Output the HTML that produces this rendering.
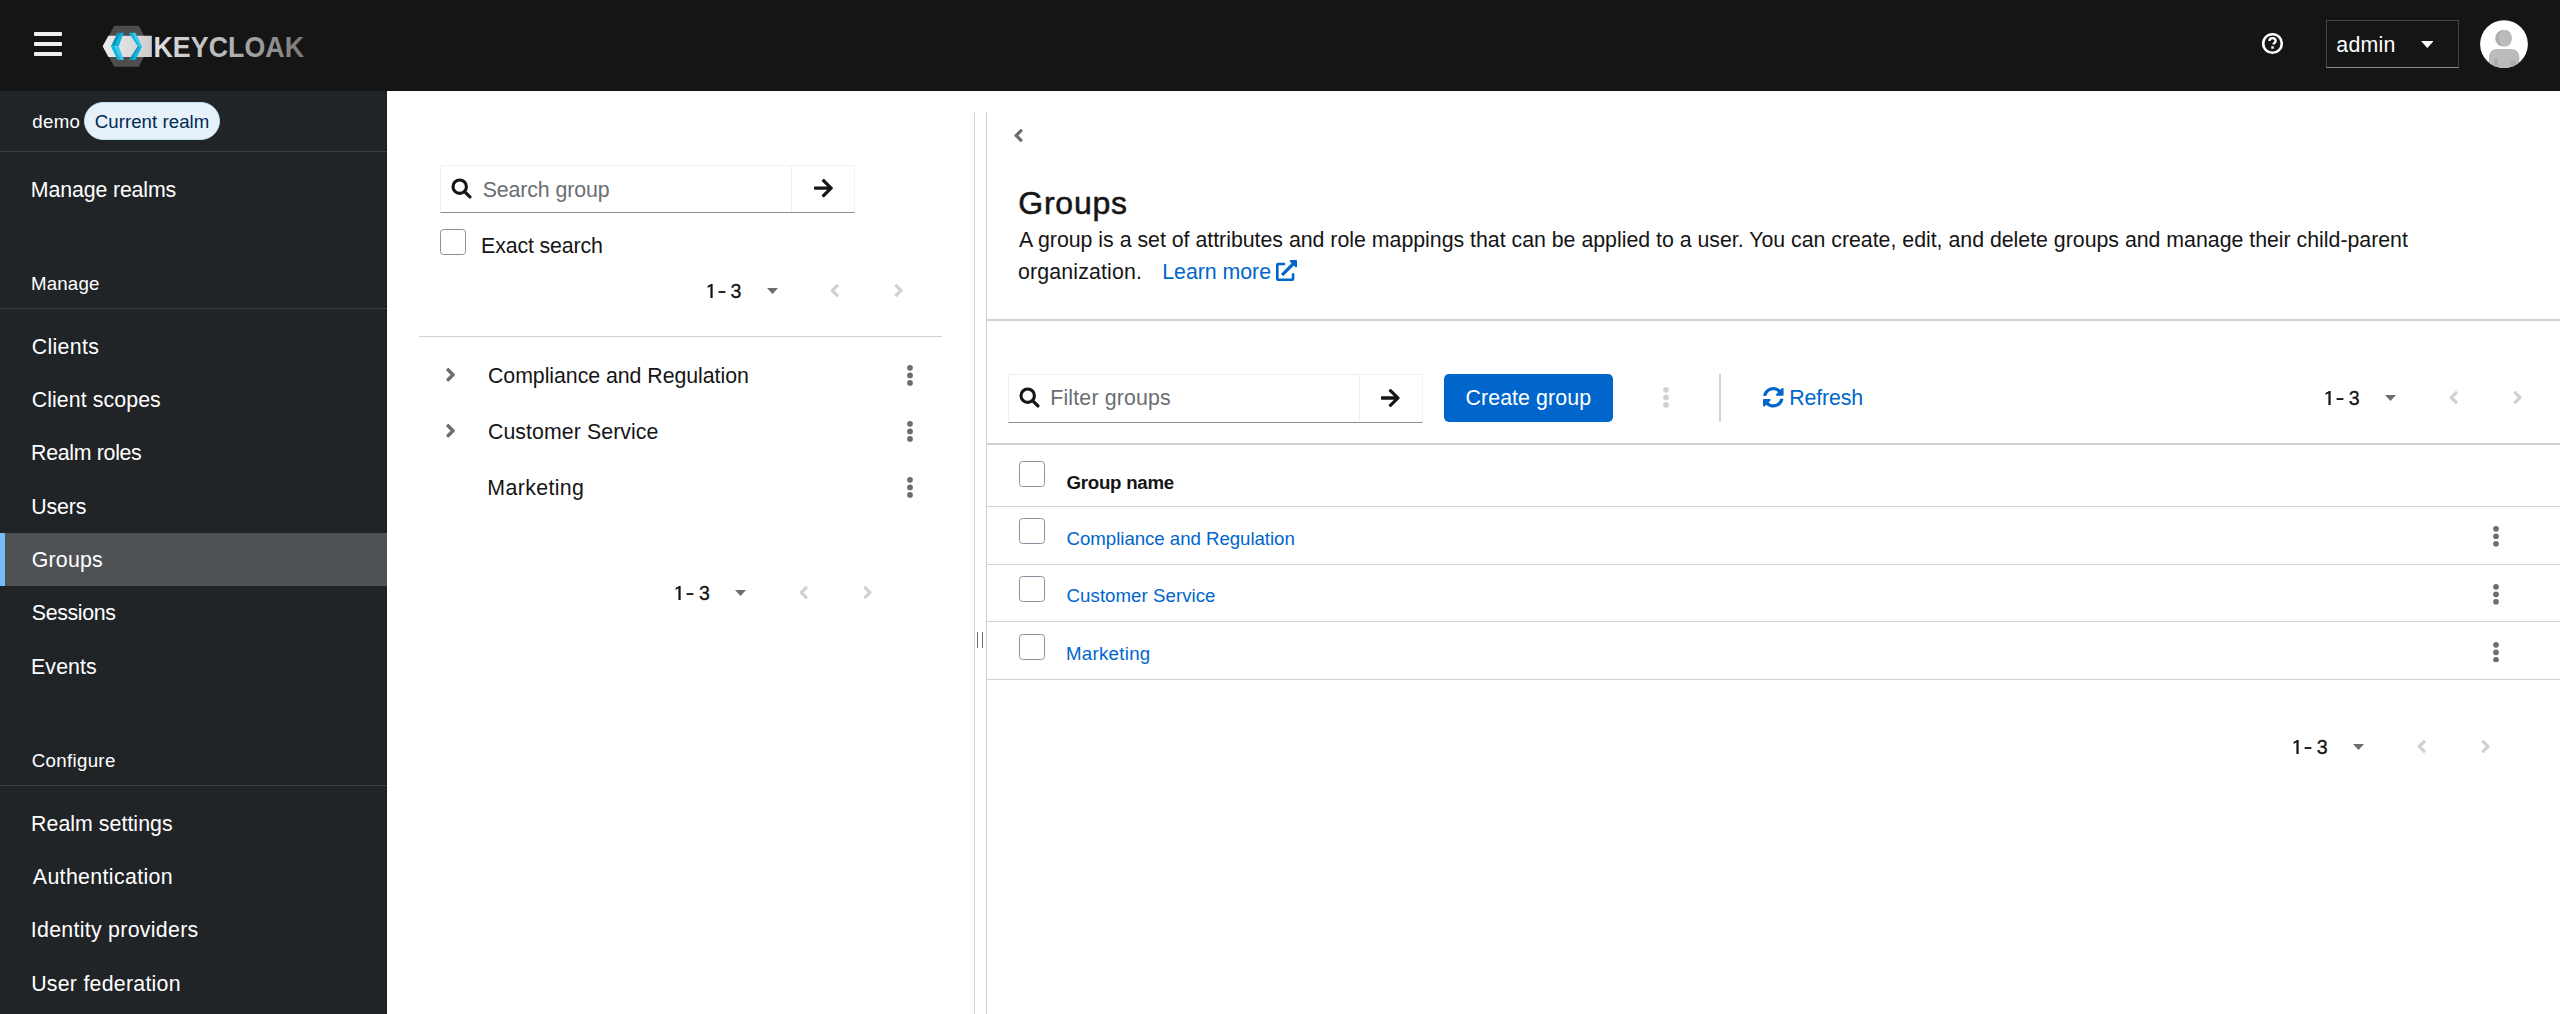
<!DOCTYPE html>
<html lang="en"><head><meta charset="utf-8"><title>Keycloak Administration Console - Groups</title>
<style>
html,body{margin:0;padding:0;}
body{width:2560px;height:1014px;overflow:hidden;position:relative;background:#fff;font-family:"Liberation Sans",sans-serif;color:#151515;}
.t{position:absolute;line-height:0;white-space:nowrap;}
.r{position:absolute;}
.s{position:absolute;display:block;}
.cb{position:absolute;width:24px;height:24px;border:1.3px solid #8f8f9d;border-radius:3.5px;background:#fff;}
header,nav,section,main{display:block;}
</style></head><body>
<header>
<div class="r" style="left:0px;top:0px;width:2560px;height:91px;background:#151515;"></div>
<div class="r" style="left:34px;top:32px;width:28px;height:4px;background:#f0f0f0;border-radius:1px"></div>
<div class="r" style="left:34px;top:42px;width:28px;height:4px;background:#f0f0f0;border-radius:1px"></div>
<div class="r" style="left:34px;top:52px;width:28px;height:4px;background:#f0f0f0;border-radius:1px"></div>
<svg class="s" style="left:100px;top:22px" width="210" height="48" viewBox="100 22 210 48">
<defs>
<linearGradient id="kg" x1="153" y1="0" x2="304" y2="0" gradientUnits="userSpaceOnUse"><stop offset="0" stop-color="#e0e0e0"/><stop offset="0.5" stop-color="#b4b4b4"/><stop offset="1" stop-color="#777"/></linearGradient>
<linearGradient id="bg" x1="103" y1="0" x2="152" y2="0" gradientUnits="userSpaceOnUse"><stop offset="0" stop-color="#ececec"/><stop offset="1" stop-color="#cdcdcd"/></linearGradient>
</defs>
<polygon points="114.2,25.8 138.8,25.8 149.5,46.2 138.8,66.7 114.2,66.7 103.5,46.2" fill="#4d4d4d"/>
<polygon points="108.4,35.7 151.8,35.7 151.8,57 108.4,57 102.6,46.2" fill="url(#bg)"/>
<polygon points="117.5,32.7 120.9,32.7 115.2,46.2 110.9,46.2" fill="#0f93ba"/>
<polygon points="120.9,32.7 123.7,32.7 118.7,46.2 115.2,46.2" fill="#00b8e3"/>
<polygon points="110.9,46.2 114.8,46.2 120.7,59.9 117.5,59.9" fill="#00b8e3"/>
<polygon points="114.8,46.2 118.7,46.2 123.9,59.9 120.7,59.9" fill="#3cc8ec"/>
<polygon points="128.9,32.7 132.1,32.7 139.9,46.2 137.7,46.2" fill="#00b8e3"/>
<polygon points="132.1,32.7 135.3,32.7 142.1,46.2 139.9,46.2" fill="#3cc8ec"/>
<polygon points="137.7,46.2 139.9,46.2 132.1,59.9 128.9,59.9" fill="#0f95bd"/>
<polygon points="139.9,46.2 142.1,46.2 135.3,59.9 132.1,59.9" fill="#00b8e3"/>
<text x="153.5" y="57.1" font-family="Liberation Sans" font-weight="700" font-size="29.4" textLength="150.5" lengthAdjust="spacingAndGlyphs" fill="url(#kg)">KEYCLOAK</text>
</svg>
<svg class="s" style="left:2261px;top:32px" width="23" height="23" viewBox="0 0 23 23">
<circle cx="11.5" cy="11.5" r="9.3" fill="none" stroke="#fff" stroke-width="2.6"/>
<path d="M8.4 9.1c0-1.9 1.4-3 3.1-3s3.1 1.1 3.1 2.8c0 1.9-2.1 2.1-2.1 3.7" fill="none" stroke="#fff" stroke-width="2.3"/>
<rect x="10.3" y="14.3" width="2.5" height="2.4" fill="#fff"/>
</svg>
<div class="r" style="left:2326px;top:20px;width:131px;height:45.6px;border:1px solid #444548;border-bottom:1.3px solid #8a8d90;"></div>
<div class="t" style="left:2336.32px;top:44.90px;font-size:21.33px;color:#ffffff;letter-spacing:0.231px;">admin</div>
<svg class="s" style="left:2420.5px;top:41.2px;" width="12.7" height="7.0" viewBox="0 0 12.7 7.0"><path fill="#ffffff" d="M0 0H12.7L6.35 7.0Z"/></svg>
<svg class="s" style="left:2480px;top:20px" width="48" height="48" viewBox="0 0 48 48">
<defs><clipPath id="avc"><circle cx="24" cy="24.1" r="23.9"/></clipPath></defs>
<circle cx="24" cy="24.1" r="23.9" fill="#fff"/>
<g clip-path="url(#avc)">
<circle cx="23.5" cy="18.3" r="8.3" fill="#adadad"/>
<ellipse cx="25.4" cy="18.3" rx="6.4" ry="8.3" fill="#bbb"/>
<path d="M9 52V37c0-4.6 3.4-8 8-8h14.3c4.6 0 8 3.4 8 8v15z" fill="#bbb"/>
<path d="M13.8 52V41.5c0-2 1.6-3.2 4.2-3.2v13.7z" fill="#adadad"/>
<path d="M30.7 39.7c3.3 0 5.5 1.3 5.5 3.8V52h-5.5z" fill="#adadad"/>
</g></svg>
</header>
<nav>
<div class="r" style="left:0px;top:91px;width:387px;height:923px;background:#212427;"></div>
<div class="r" style="left:386px;top:91px;width:1px;height:923px;background:#1b1d21;"></div>
<div class="t" style="left:32.15px;top:121.83px;font-size:18.67px;color:#ffffff;letter-spacing:0.383px;">demo</div>
<div class="r" style="left:84px;top:102px;width:134px;height:36px;border:1px solid #bee1f4;border-radius:19px;background:#e7f1fa;"></div>
<div class="t" style="left:94.72px;top:121.83px;font-size:18.67px;color:#002952;letter-spacing:0.050px;">Current realm</div>
<div class="r" style="left:0px;top:151px;width:387px;height:1px;background:#3c3f42;"></div>
<div class="t" style="left:30.85px;top:189.90px;font-size:21.33px;color:#ffffff;letter-spacing:-0.133px;">Manage realms</div>
<div class="t" style="left:31.10px;top:283.83px;font-size:18.67px;color:#ffffff;letter-spacing:0.155px;">Manage</div>
<div class="r" style="left:0px;top:308px;width:387px;height:1px;background:#3c3f42;"></div>
<div class="r" style="left:0px;top:533px;width:387px;height:53.33px;background:#4f5255;"></div>
<div class="r" style="left:0px;top:533px;width:5.33px;height:53.33px;background:#73bcf7;"></div>
<div class="t" style="left:31.67px;top:346.90px;font-size:21.33px;color:#ffffff;letter-spacing:0.325px;">Clients</div>
<div class="t" style="left:31.67px;top:399.90px;font-size:21.33px;color:#ffffff;letter-spacing:0.090px;">Client scopes</div>
<div class="t" style="left:31.05px;top:452.90px;font-size:21.33px;color:#ffffff;letter-spacing:-0.305px;">Realm roles</div>
<div class="t" style="left:31.17px;top:506.90px;font-size:21.33px;color:#ffffff;letter-spacing:-0.137px;">Users</div>
<div class="t" style="left:31.80px;top:559.90px;font-size:21.33px;color:#ffffff;letter-spacing:0.175px;">Groups</div>
<div class="t" style="left:31.80px;top:612.90px;font-size:21.33px;color:#ffffff;letter-spacing:-0.350px;">Sessions</div>
<div class="t" style="left:31.05px;top:666.90px;font-size:21.33px;color:#ffffff;letter-spacing:0.095px;">Events</div>
<div class="t" style="left:31.73px;top:760.83px;font-size:18.67px;color:#ffffff;letter-spacing:0.331px;">Configure</div>
<div class="r" style="left:0px;top:785px;width:387px;height:1px;background:#3c3f42;"></div>
<div class="t" style="left:31.05px;top:823.90px;font-size:21.33px;color:#ffffff;letter-spacing:0.038px;">Realm settings</div>
<div class="t" style="left:32.80px;top:876.90px;font-size:21.33px;color:#ffffff;letter-spacing:0.363px;">Authentication</div>
<div class="t" style="left:30.80px;top:929.90px;font-size:21.33px;color:#ffffff;letter-spacing:0.293px;">Identity providers</div>
<div class="t" style="left:31.17px;top:983.90px;font-size:21.33px;color:#ffffff;letter-spacing:0.259px;">User federation</div>
</nav>
<section>
<div class="r" style="left:440px;top:165px;width:413px;height:46px;border:1px solid #f0f0f0;border-bottom:1px solid #8a8d90;"></div>
<div class="r" style="left:791px;top:166px;width:1px;height:46px;background:#f0f0f0;"></div>
<svg class="s" style="left:451px;top:178px;" width="21" height="21" viewBox="0 0 21 21"><circle cx="8.7" cy="8.7" r="6.7" fill="none" stroke="#151515" stroke-width="3.1"/><line x1="13.8" y1="13.8" x2="18.9" y2="18.9" stroke="#151515" stroke-width="3.3" stroke-linecap="round"/></svg>
<div class="t" style="left:482.70px;top:189.90px;font-size:21.33px;color:#6a6e73;letter-spacing:-0.109px;">Search group</div>
<svg class="s" style="left:814px;top:179.4px;overflow:visible" width="19" height="18.3" viewBox="0 44 448 424"><path fill="#151515" d="M190.5 66.9l22.2-22.2c9.4-9.4 24.6-9.4 33.9 0L441 239c9.4 9.4 9.4 24.6 0 33.9L246.6 467.3c-9.4 9.4-24.6 9.4-33.9 0l-22.2-22.2c-9.5-9.5-9.3-25 .4-34.3L311.4 296H24c-13.3 0-24-10.7-24-24v-32c0-13.3 10.7-24 24-24h287.4L190.9 101.2c-9.8-9.3-10-24.8-.4-34.3z"/></svg>
<div class="cb" style="left:440px;top:229px"></div>
<div class="t" style="left:481.05px;top:245.90px;font-size:21.33px;color:#151515;letter-spacing:-0.139px;">Exact search</div>
<svg class="s" style="left:706.5px;top:283px;" width="20" height="16" viewBox="-0.5 -15 20 16"><path fill="#151515" d="M0 -11.9L3.6 -14H5.15V0H2.9V-11.7L0.3 -10.1Z"/><rect x="11.1" y="-6.9" width="6.8" height="1.85" fill="#151515"/></svg>
<div class="t" style="left:730.45px;top:291.50px;font-size:19.6px;color:#151515;-webkit-text-stroke:0.3px #151515;transform:translateY(-0.6px);">3</div>
<svg class="s" style="left:766.8px;top:288.2px;" width="11.0" height="6.0" viewBox="0 0 11.0 6.0"><path fill="#6a6e73" d="M0 0H11.0L5.50 6.0Z"/></svg>
<svg class="s" style="left:830.3px;top:283.5px;overflow:visible" width="9.3" height="13.0" viewBox="22 96 212 320"><path fill="#d2d2d2" d="M31.7 239l136-136c9.4-9.4 24.6-9.4 33.9 0l22.6 22.6c9.4 9.4 9.4 24.6 0 33.9L127.9 256l96.4 96.4c9.4 9.4 9.4 24.6 0 33.9L201.7 409c-9.4 9.4-24.6 9.4-33.9 0l-136-136c-9.5-9.4-9.5-24.6-.1-34z"/></svg>
<svg class="s" style="left:894.3px;top:283.5px;overflow:visible" width="9.3" height="13.0" viewBox="22 96 212 320"><path fill="#d2d2d2" d="M224.3 273l-136 136c-9.4 9.4-24.6 9.4-33.9 0l-22.6-22.6c-9.4-9.4-9.4-24.6 0-33.9l96.4-96.4-96.4-96.4c-9.4-9.4-9.4-24.6 0-33.9L54.3 103c9.4-9.4 24.6-9.4 33.9 0l136 136c9.5 9.4 9.5 24.6.1 34z"/></svg>
<div class="r" style="left:419px;top:336px;width:523px;height:1px;background:#d2d2d2;"></div>
<svg class="s" style="left:445.8px;top:368px;overflow:visible" width="9.2" height="13.5" viewBox="22 96 212 320"><path fill="#6a6e73" d="M224.3 273l-136 136c-9.4 9.4-24.6 9.4-33.9 0l-22.6-22.6c-9.4-9.4-9.4-24.6 0-33.9l96.4-96.4-96.4-96.4c-9.4-9.4-9.4-24.6 0-33.9L54.3 103c9.4-9.4 24.6-9.4 33.9 0l136 136c9.5 9.4 9.5 24.6.1 34z"/></svg>
<div class="t" style="left:487.98px;top:375.90px;font-size:21.33px;color:#151515;letter-spacing:-0.050px;">Compliance and Regulation</div>
<svg class="s" style="left:905.8px;top:365.3px;" width="8" height="20.8" viewBox="0 0 8 20.8"><circle cx="4" cy="2.85" r="2.85" fill="#6a6e73"/><circle cx="4" cy="10.40" r="2.85" fill="#6a6e73"/><circle cx="4" cy="17.95" r="2.85" fill="#6a6e73"/></svg>
<svg class="s" style="left:445.8px;top:424px;overflow:visible" width="9.2" height="13.5" viewBox="22 96 212 320"><path fill="#6a6e73" d="M224.3 273l-136 136c-9.4 9.4-24.6 9.4-33.9 0l-22.6-22.6c-9.4-9.4-9.4-24.6 0-33.9l96.4-96.4-96.4-96.4c-9.4-9.4-9.4-24.6 0-33.9L54.3 103c9.4-9.4 24.6-9.4 33.9 0l136 136c9.5 9.4 9.5 24.6.1 34z"/></svg>
<div class="t" style="left:487.98px;top:431.90px;font-size:21.33px;color:#151515;letter-spacing:0.067px;">Customer Service</div>
<svg class="s" style="left:905.8px;top:421.3px;" width="8" height="20.8" viewBox="0 0 8 20.8"><circle cx="4" cy="2.85" r="2.85" fill="#6a6e73"/><circle cx="4" cy="10.40" r="2.85" fill="#6a6e73"/><circle cx="4" cy="17.95" r="2.85" fill="#6a6e73"/></svg>
<div class="t" style="left:487.35px;top:487.90px;font-size:21.33px;color:#151515;letter-spacing:0.362px;">Marketing</div>
<svg class="s" style="left:905.8px;top:477.3px;" width="8" height="20.8" viewBox="0 0 8 20.8"><circle cx="4" cy="2.85" r="2.85" fill="#6a6e73"/><circle cx="4" cy="10.40" r="2.85" fill="#6a6e73"/><circle cx="4" cy="17.95" r="2.85" fill="#6a6e73"/></svg>
<svg class="s" style="left:675.0px;top:585px;" width="20" height="16" viewBox="-0.5 -15 20 16"><path fill="#151515" d="M0 -11.9L3.6 -14H5.15V0H2.9V-11.7L0.3 -10.1Z"/><rect x="11.1" y="-6.9" width="6.8" height="1.85" fill="#151515"/></svg>
<div class="t" style="left:698.95px;top:593.50px;font-size:19.6px;color:#151515;-webkit-text-stroke:0.3px #151515;transform:translateY(-0.6px);">3</div>
<svg class="s" style="left:735.3px;top:590.2px;" width="11.0" height="6.0" viewBox="0 0 11.0 6.0"><path fill="#6a6e73" d="M0 0H11.0L5.50 6.0Z"/></svg>
<svg class="s" style="left:798.8px;top:585.5px;overflow:visible" width="9.3" height="13.0" viewBox="22 96 212 320"><path fill="#d2d2d2" d="M31.7 239l136-136c9.4-9.4 24.6-9.4 33.9 0l22.6 22.6c9.4 9.4 9.4 24.6 0 33.9L127.9 256l96.4 96.4c9.4 9.4 9.4 24.6 0 33.9L201.7 409c-9.4 9.4-24.6 9.4-33.9 0l-136-136c-9.5-9.4-9.5-24.6-.1-34z"/></svg>
<svg class="s" style="left:862.8px;top:585.5px;overflow:visible" width="9.3" height="13.0" viewBox="22 96 212 320"><path fill="#d2d2d2" d="M224.3 273l-136 136c-9.4 9.4-24.6 9.4-33.9 0l-22.6-22.6c-9.4-9.4-9.4-24.6 0-33.9l96.4-96.4-96.4-96.4c-9.4-9.4-9.4-24.6 0-33.9L54.3 103c9.4-9.4 24.6-9.4 33.9 0l136 136c9.5 9.4 9.5 24.6.1 34z"/></svg>
</section>
<div class="r" style="left:974px;top:112px;width:1px;height:902px;background:#d2d2d2;"></div>
<div class="r" style="left:986px;top:112px;width:1px;height:902px;background:#d2d2d2;"></div>
<div class="r" style="left:977px;top:632px;width:1px;height:16px;background:#6a6e73;"></div>
<div class="r" style="left:982px;top:632px;width:1px;height:16px;background:#6a6e73;"></div>
<main>
<svg class="s" style="left:1014px;top:129px;overflow:visible" width="9" height="13" viewBox="22 96 212 320"><path fill="#6a6e73" d="M31.7 239l136-136c9.4-9.4 24.6-9.4 33.9 0l22.6 22.6c9.4 9.4 9.4 24.6 0 33.9L127.9 256l96.4 96.4c9.4 9.4 9.4 24.6 0 33.9L201.7 409c-9.4 9.4-24.6 9.4-33.9 0l-136-136c-9.5-9.4-9.5-24.6-.1-34z"/></svg>
<h1 class="t" style="left:1018.27px;top:203.21px;font-size:32px;color:#151515;letter-spacing:0.770px;margin:0;font-weight:400;-webkit-text-stroke:0.55px #151515;">Groups</h1>
<div class="t" style="left:1019.00px;top:239.90px;font-size:21.33px;color:#151515;letter-spacing:-0.013px;">A group is a set of attributes and role mappings that can be applied to a user. You can create, edit, and delete groups and manage their child-parent</div>
<div class="t" style="left:1018.12px;top:271.90px;font-size:21.33px;color:#151515;letter-spacing:0.135px;">organization.</div>
<div class="t" style="left:1162.25px;top:271.90px;font-size:21.33px;color:#0066cc;letter-spacing:-0.033px;">Learn more</div>
<svg class="s" style="left:1276px;top:260px;" width="21" height="21" viewBox="0 0 512 512"><path fill="#0066cc" d="M432,320H400a16,16,0,0,0-16,16V448H64V128H208a16,16,0,0,0,16-16V80a16,16,0,0,0-16-16H48A48,48,0,0,0,0,112V464a48,48,0,0,0,48,48H400a48,48,0,0,0,48-48V336A16,16,0,0,0,432,320ZM488,0h-128c-21.37,0-32.05,25.91-17,41l35.73,35.73L135,320.37a24,24,0,0,0,0,34L157.67,377a24,24,0,0,0,34,0L435.28,133.32,471,169c15,15,41,4.5,41-17V24A24,24,0,0,0,488,0Z"/></svg>
<div class="r" style="left:987px;top:319px;width:1573px;height:2px;background:#d2d2d2;"></div>
<div class="r" style="left:1008px;top:374px;width:413px;height:46.5px;border:1px solid #f0f0f0;border-bottom:1px solid #8a8d90;"></div>
<div class="r" style="left:1359px;top:375px;width:1px;height:46px;background:#f0f0f0;"></div>
<svg class="s" style="left:1019px;top:387px;" width="21" height="21" viewBox="0 0 21 21"><circle cx="8.7" cy="8.7" r="6.7" fill="none" stroke="#151515" stroke-width="3.1"/><line x1="13.8" y1="13.8" x2="18.9" y2="18.9" stroke="#151515" stroke-width="3.3" stroke-linecap="round"/></svg>
<div class="t" style="left:1050.25px;top:397.90px;font-size:21.33px;color:#6a6e73;letter-spacing:0.167px;">Filter groups</div>
<svg class="s" style="left:1381.3px;top:388.7px;overflow:visible" width="18.7" height="18" viewBox="0 44 448 424"><path fill="#151515" d="M190.5 66.9l22.2-22.2c9.4-9.4 24.6-9.4 33.9 0L441 239c9.4 9.4 9.4 24.6 0 33.9L246.6 467.3c-9.4 9.4-24.6 9.4-33.9 0l-22.2-22.2c-9.5-9.5-9.3-25 .4-34.3L311.4 296H24c-13.3 0-24-10.7-24-24v-32c0-13.3 10.7-24 24-24h287.4L190.9 101.2c-9.8-9.3-10-24.8-.4-34.3z"/></svg>
<div class="r" style="left:1444px;top:374px;width:169px;height:48px;border-radius:5px;background:#0066cc;"></div>
<div class="t" style="left:1465.47px;top:397.90px;font-size:21.33px;color:#ffffff;letter-spacing:0.100px;">Create group</div>
<svg class="s" style="left:1661.6px;top:387.2px;" width="8" height="20.8" viewBox="0 0 8 20.8"><circle cx="4" cy="2.85" r="2.85" fill="#d2d2d2"/><circle cx="4" cy="10.40" r="2.85" fill="#d2d2d2"/><circle cx="4" cy="17.95" r="2.85" fill="#d2d2d2"/></svg>
<div class="r" style="left:1719px;top:374px;width:2px;height:48px;background:#d2d2d2;"></div>
<svg class="s" style="left:1763.3px;top:387.2px;" width="20.6" height="20.6" viewBox="8 8 496 496"><path fill="#0066cc" d="M370.72 133.28C339.458 104.008 298.888 87.962 255.848 88c-77.458.068-144.328 53.178-162.791 126.85-1.344 5.363-6.122 9.15-11.651 9.15H24.103c-7.498 0-13.194-6.807-11.807-14.176C33.933 94.924 134.813 8 256 8c66.448 0 126.791 26.136 171.315 68.685L463.03 40.97C478.149 25.851 504 36.559 504 57.941V192c0 13.255-10.745 24-24 24H345.941c-21.382 0-32.09-25.851-16.971-40.971l41.75-41.749zM32 296h134.059c21.382 0 32.09 25.851 16.971 40.971l-41.75 41.75c31.262 29.273 71.835 45.319 114.876 45.28 77.418-.07 144.315-53.144 162.787-126.849 1.344-5.363 6.122-9.15 11.651-9.15h57.304c7.498 0 13.194 6.807 11.807 14.176C478.067 417.076 377.187 504 256 504c-66.448 0-126.791-26.136-171.315-68.685L48.97 471.03C33.851 486.149 8 475.441 8 454.059V320c0-13.255 10.745-24 24-24z"/></svg>
<div class="t" style="left:1789.25px;top:397.90px;font-size:21.33px;color:#0066cc;letter-spacing:-0.154px;">Refresh</div>
<svg class="s" style="left:2324.8px;top:390px;" width="20" height="16" viewBox="-0.5 -15 20 16"><path fill="#151515" d="M0 -11.9L3.6 -14H5.15V0H2.9V-11.7L0.3 -10.1Z"/><rect x="11.1" y="-6.9" width="6.8" height="1.85" fill="#151515"/></svg>
<div class="t" style="left:2348.75px;top:398.50px;font-size:19.6px;color:#151515;-webkit-text-stroke:0.3px #151515;transform:translateY(-0.6px);">3</div>
<svg class="s" style="left:2385.1px;top:395.2px;" width="11.0" height="6.0" viewBox="0 0 11.0 6.0"><path fill="#6a6e73" d="M0 0H11.0L5.50 6.0Z"/></svg>
<svg class="s" style="left:2448.6px;top:390.5px;overflow:visible" width="9.3" height="13.0" viewBox="22 96 212 320"><path fill="#d2d2d2" d="M31.7 239l136-136c9.4-9.4 24.6-9.4 33.9 0l22.6 22.6c9.4 9.4 9.4 24.6 0 33.9L127.9 256l96.4 96.4c9.4 9.4 9.4 24.6 0 33.9L201.7 409c-9.4 9.4-24.6 9.4-33.9 0l-136-136c-9.5-9.4-9.5-24.6-.1-34z"/></svg>
<svg class="s" style="left:2512.6px;top:390.5px;overflow:visible" width="9.3" height="13.0" viewBox="22 96 212 320"><path fill="#d2d2d2" d="M224.3 273l-136 136c-9.4 9.4-24.6 9.4-33.9 0l-22.6-22.6c-9.4-9.4-9.4-24.6 0-33.9l96.4-96.4-96.4-96.4c-9.4-9.4-9.4-24.6 0-33.9L54.3 103c9.4-9.4 24.6-9.4 33.9 0l136 136c9.5 9.4 9.5 24.6.1 34z"/></svg>
<div class="r" style="left:987px;top:443px;width:1573px;height:2px;background:#d2d2d2;"></div>
<div class="cb" style="left:1019px;top:461px"></div>
<div class="t" style="left:1066.55px;top:482.83px;font-size:18.67px;color:#151515;font-weight:700;letter-spacing:-0.247px;">Group name</div>
<div class="r" style="left:987px;top:506px;width:1573px;height:1px;background:#d2d2d2;"></div>
<div class="cb" style="left:1019px;top:518.4px"></div>
<div class="t" style="left:1066.62px;top:538.83px;font-size:18.67px;color:#0066cc;letter-spacing:-0.044px;">Compliance and Regulation</div>
<svg class="s" style="left:2491.6px;top:526.3px;" width="8" height="20.6" viewBox="0 0 8 20.6"><circle cx="4" cy="2.85" r="2.85" fill="#6a6e73"/><circle cx="4" cy="10.30" r="2.85" fill="#6a6e73"/><circle cx="4" cy="17.75" r="2.85" fill="#6a6e73"/></svg>
<div class="r" style="left:987px;top:564px;width:1573px;height:1px;background:#d2d2d2;"></div>
<div class="cb" style="left:1019px;top:576.1px"></div>
<div class="t" style="left:1066.62px;top:595.83px;font-size:18.67px;color:#0066cc;letter-spacing:0.038px;">Customer Service</div>
<svg class="s" style="left:2491.6px;top:583.97px;" width="8" height="20.6" viewBox="0 0 8 20.6"><circle cx="4" cy="2.85" r="2.85" fill="#6a6e73"/><circle cx="4" cy="10.30" r="2.85" fill="#6a6e73"/><circle cx="4" cy="17.75" r="2.85" fill="#6a6e73"/></svg>
<div class="r" style="left:987px;top:621px;width:1573px;height:1px;background:#d2d2d2;"></div>
<div class="cb" style="left:1019px;top:633.7px"></div>
<div class="t" style="left:1066.00px;top:653.83px;font-size:18.67px;color:#0066cc;letter-spacing:0.281px;">Marketing</div>
<svg class="s" style="left:2491.6px;top:641.64px;" width="8" height="20.6" viewBox="0 0 8 20.6"><circle cx="4" cy="2.85" r="2.85" fill="#6a6e73"/><circle cx="4" cy="10.30" r="2.85" fill="#6a6e73"/><circle cx="4" cy="17.75" r="2.85" fill="#6a6e73"/></svg>
<div class="r" style="left:987px;top:679px;width:1573px;height:1px;background:#d2d2d2;"></div>
<svg class="s" style="left:2292.9px;top:739px;" width="20" height="16" viewBox="-0.5 -15 20 16"><path fill="#151515" d="M0 -11.9L3.6 -14H5.15V0H2.9V-11.7L0.3 -10.1Z"/><rect x="11.1" y="-6.9" width="6.8" height="1.85" fill="#151515"/></svg>
<div class="t" style="left:2316.85px;top:747.50px;font-size:19.6px;color:#151515;-webkit-text-stroke:0.3px #151515;transform:translateY(-0.6px);">3</div>
<svg class="s" style="left:2353.2px;top:744.2px;" width="11.0" height="6.0" viewBox="0 0 11.0 6.0"><path fill="#6a6e73" d="M0 0H11.0L5.50 6.0Z"/></svg>
<svg class="s" style="left:2416.7px;top:739.5px;overflow:visible" width="9.3" height="13.0" viewBox="22 96 212 320"><path fill="#d2d2d2" d="M31.7 239l136-136c9.4-9.4 24.6-9.4 33.9 0l22.6 22.6c9.4 9.4 9.4 24.6 0 33.9L127.9 256l96.4 96.4c9.4 9.4 9.4 24.6 0 33.9L201.7 409c-9.4 9.4-24.6 9.4-33.9 0l-136-136c-9.5-9.4-9.5-24.6-.1-34z"/></svg>
<svg class="s" style="left:2480.7px;top:739.5px;overflow:visible" width="9.3" height="13.0" viewBox="22 96 212 320"><path fill="#d2d2d2" d="M224.3 273l-136 136c-9.4 9.4-24.6 9.4-33.9 0l-22.6-22.6c-9.4-9.4-9.4-24.6 0-33.9l96.4-96.4-96.4-96.4c-9.4-9.4-9.4-24.6 0-33.9L54.3 103c9.4-9.4 24.6-9.4 33.9 0l136 136c9.5 9.4 9.5 24.6.1 34z"/></svg>
</main>
</body></html>
